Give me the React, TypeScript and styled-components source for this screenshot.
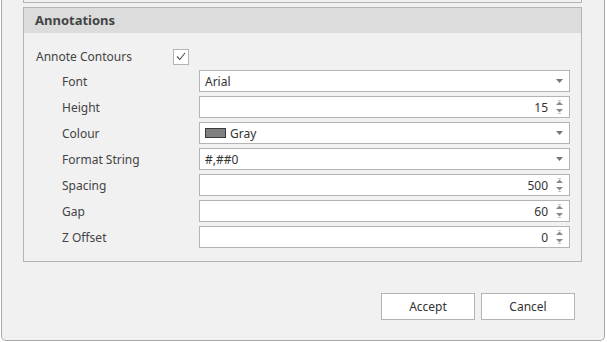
import { Fragment } from "react";
import styled, { createGlobalStyle } from "styled-components";

const GlobalStyle = createGlobalStyle`
    html, body {
        margin: 0;
        padding: 0;
        background: #ffffff;
    }
    body {
        font-family: "Noto Sans", "Open Sans", sans-serif;
        font-size: 12px;
        color: #444444;
    }
`;

const Window = styled.div`
    margin-left: 1px;
    width: 604px;
    height: 341px;
    box-sizing: border-box;
    background: #f1f1f1;
    border: 1px solid #a9a9a9;
    border-top: none;
    border-radius: 0 0 5px 5px;
    padding: 0 22px 0 21px;
    display: flex;
    flex-direction: column;
`;

const TopPanel = styled.div`
    height: 2px;
    border: 1px solid #b4b4b4;
    border-top: none;
    background: #f1f1f1;
`;

const GroupBox = styled.section`
    margin-top: 4px;
    border: 1px solid #b4b4b4;
    height: 255px;
    box-sizing: border-box;
`;

const GroupHeader = styled.h2`
    margin: 0;
    height: 25px;
    background: #dcdcdc;
    padding-left: 11px;
    font-size: 13px;
    font-weight: 700;
    line-height: 25px;
    color: #444444;
`;

const GroupBody = styled.div`
    padding: 15px 12px 12px 12px;
    display: flex;
    flex-direction: column;
    gap: 6px;
`;

const CheckRow = styled.div`
    display: grid;
    grid-template-columns: 137px 16px;
    align-items: center;
    height: 16px;
`;

const CheckBox = styled.span`
    box-sizing: border-box;
    width: 16px;
    height: 16px;
    border: 1px solid #b4b4b4;
    background: #ffffff;
    display: flex;
    align-items: center;
    justify-content: center;
`;

const Fields = styled.div`
    display: grid;
    grid-template-columns: 137px 371px;
    grid-auto-rows: 22px;
    row-gap: 4px;
    padding-left: 26px;
    align-items: center;
`;

const Label = styled.span`
    white-space: nowrap;
`;

const Editor = styled.div`
    box-sizing: border-box;
    height: 22px;
    background: #ffffff;
    border: 1px solid #b4b4b4;
    display: flex;
    align-items: center;
    padding: 0 5px 0 5px;
    gap: 6px;
`;

const Value = styled.span<{ $align?: "left" | "right" }>`
    flex: 1;
    color: #333333;
    white-space: nowrap;
    display: flex;
    align-items: center;
    justify-content: ${(p) => (p.$align === "right" ? "flex-end" : "flex-start")};
    gap: 4px;
`;

const Swatch = styled.span<{ $color: string }>`
    display: inline-block;
    width: 21px;
    height: 10px;
    box-sizing: border-box;
    border: 1px solid #3a3a3a;
    background: ${(p) => p.$color};
`;

const ButtonIcon = styled.span`
    width: 10px;
    display: flex;
    flex-direction: column;
    align-items: center;
    justify-content: center;
    gap: 2px;
`;

const Footer = styled.div`
    display: flex;
    justify-content: flex-end;
    gap: 6px;
    margin-top: 31px;
    padding-right: 7px;
`;

const Button = styled.button`
    width: 94px;
    height: 27px;
    background: #ffffff;
    border: 1px solid #b4b4b4;
    border-radius: 0;
    font-family: inherit;
    font-size: 12px;
    color: #333333;
    padding: 0;
`;

const DropArrow = () => (
    <svg width="7" height="4" viewBox="0 0 7 4">
        <path d="M0 0 H7 L3.5 4 Z" fill="#777777" />
    </svg>
);

const SpinArrows = () => (
    <ButtonIcon>
        <svg width="7" height="6" viewBox="0 0 7 6">
            <rect x="2" y="0" width="3" height="1" fill="#c4c4c4" />
            <path d="M3.5 1.5 L7 5 H0 Z" fill="#8a8a8a" />
        </svg>
        <svg width="7" height="6" viewBox="0 0 7 6">
            <path d="M0 1 H7 L3.5 4.5 Z" fill="#8a8a8a" />
            <rect x="2" y="5" width="3" height="1" fill="#c4c4c4" />
        </svg>
    </ButtonIcon>
);

type Field = { label: string; kind: "combo" | "spin"; value: string; color?: string };

const fields: Field[] = [
    { label: "Font", kind: "combo", value: "Arial" },
    { label: "Height", kind: "spin", value: "15" },
    { label: "Colour", kind: "combo", value: "Gray", color: "#808080" },
    { label: "Format String", kind: "combo", value: "#,##0" },
    { label: "Spacing", kind: "spin", value: "500" },
    { label: "Gap", kind: "spin", value: "60" },
    { label: "Z Offset", kind: "spin", value: "0" },
];

export default function App() {
    return (
        <>
            <GlobalStyle />
            <Window>
                <TopPanel />
                <GroupBox>
                    <GroupHeader>Annotations</GroupHeader>
                    <GroupBody>
                        <CheckRow>
                            <Label>Annote Contours</Label>
                            <CheckBox>
                                <svg width="10" height="9" viewBox="0 0 10 9">
                                    <path d="M1 4.5 L3.8 7.5 L9 1" fill="none" stroke="#505050" strokeWidth="1.1" />
                                </svg>
                            </CheckBox>
                        </CheckRow>
                        <Fields>
                            {fields.map((f) => (
                                <Fragment key={f.label}>
                                    <Label>{f.label}</Label>
                                    <Editor>
                                        <Value $align={f.kind === "spin" ? "right" : "left"}>
                                            {f.color && <Swatch $color={f.color} />}
                                            {f.value}
                                        </Value>
                                        {f.kind === "combo" ? (
                                            <ButtonIcon>
                                                <DropArrow />
                                            </ButtonIcon>
                                        ) : (
                                            <SpinArrows />
                                        )}
                                    </Editor>
                                </Fragment>
                            ))}
                        </Fields>
                    </GroupBody>
                </GroupBox>
                <Footer>
                    <Button>Accept</Button>
                    <Button>Cancel</Button>
                </Footer>
            </Window>
        </>
    );
}
